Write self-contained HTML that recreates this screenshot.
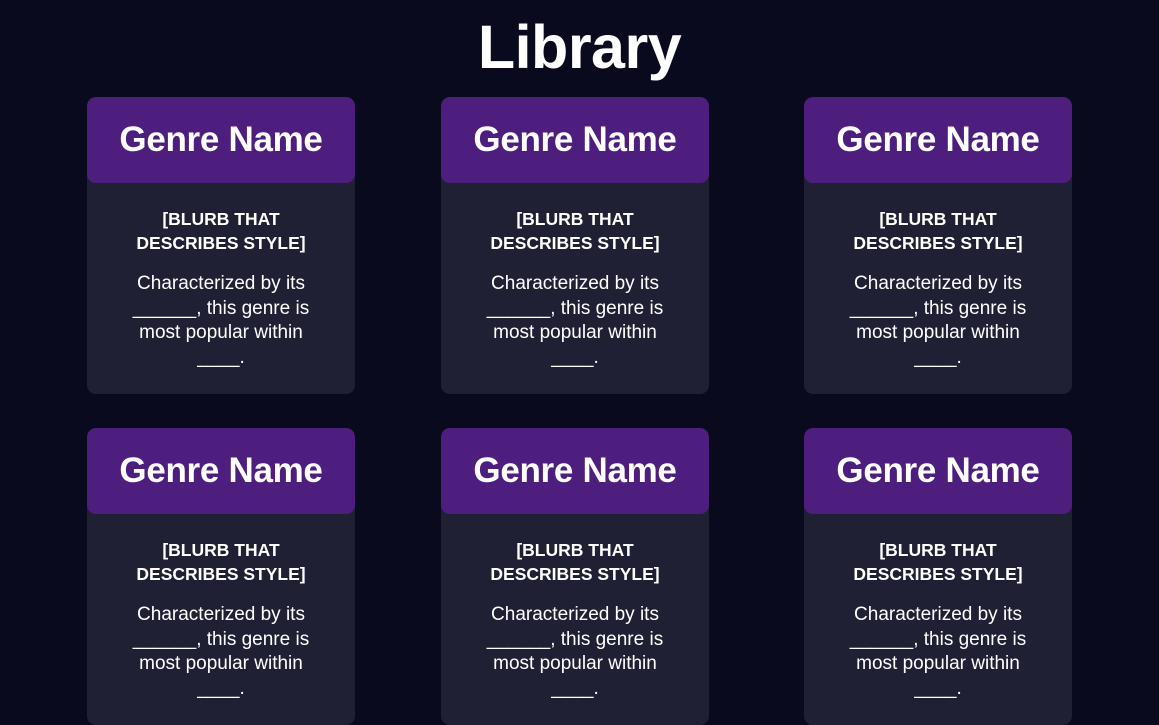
<!DOCTYPE html>
<html><head><meta charset="utf-8"><style>
*{margin:0;padding:0;box-sizing:border-box}
body{width:1159px;height:650px;overflow:hidden;background:#0a0a1e;font-family:"Liberation Sans",sans-serif;color:#fff;position:relative}
h1{position:absolute;top:12px;left:0;width:1159px;text-align:center;font-size:61px;font-weight:700;line-height:70px;letter-spacing:-0.5px}
.card{position:absolute;width:268px;height:297px;background:#202034;border-radius:9px;overflow:hidden;text-align:center}
.hd{height:86px;background:#4e1e7e;border-radius:9px;font-size:35px;font-weight:700;line-height:86px;letter-spacing:-0.3px}
.bl{margin-top:24px;font-size:17.5px;font-weight:700;line-height:24px}
.ds{margin-top:17px;font-size:19px;line-height:24.5px}
</style></head><body>
<h1>Library</h1>
<div class="card" style="left:87px;top:97px"><div class="hd">Genre Name</div><div class="bl">[BLURB THAT<br>DESCRIBES STYLE]</div><div class="ds">Characterized by its<br>______, this genre is<br>most popular within<br>____.</div></div>
<div class="card" style="left:441px;top:97px"><div class="hd">Genre Name</div><div class="bl">[BLURB THAT<br>DESCRIBES STYLE]</div><div class="ds">Characterized by its<br>______, this genre is<br>most popular within<br>____.</div></div>
<div class="card" style="left:804px;top:97px"><div class="hd">Genre Name</div><div class="bl">[BLURB THAT<br>DESCRIBES STYLE]</div><div class="ds">Characterized by its<br>______, this genre is<br>most popular within<br>____.</div></div>
<div class="card" style="left:87px;top:428px"><div class="hd">Genre Name</div><div class="bl">[BLURB THAT<br>DESCRIBES STYLE]</div><div class="ds">Characterized by its<br>______, this genre is<br>most popular within<br>____.</div></div>
<div class="card" style="left:441px;top:428px"><div class="hd">Genre Name</div><div class="bl">[BLURB THAT<br>DESCRIBES STYLE]</div><div class="ds">Characterized by its<br>______, this genre is<br>most popular within<br>____.</div></div>
<div class="card" style="left:804px;top:428px"><div class="hd">Genre Name</div><div class="bl">[BLURB THAT<br>DESCRIBES STYLE]</div><div class="ds">Characterized by its<br>______, this genre is<br>most popular within<br>____.</div></div>
</body></html>
